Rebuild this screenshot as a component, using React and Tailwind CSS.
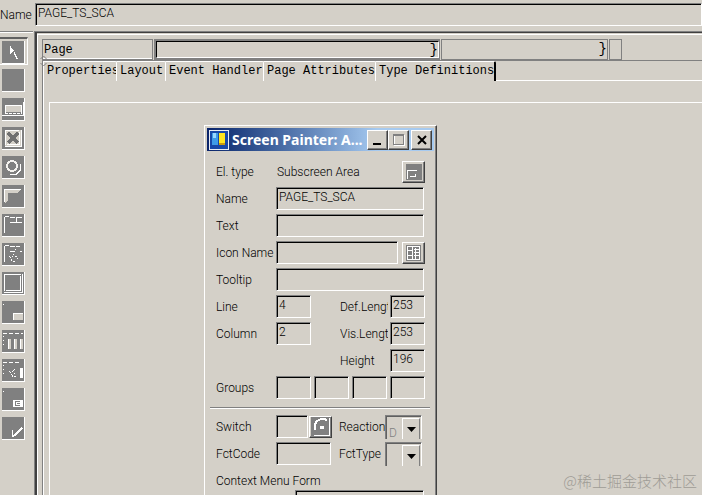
import React, { useState } from "react";

const tools = [
  {
    name: "Select",
    icon: (
      <>
        <path d="M8 5v8h1v-1h1v-1h1v-1h1v-1h-1v-1h-1V7H9V5z" fill="#fff" />
        <path d="M12 11v2h1v2h1v2h1v1" stroke="#fff" fill="none" />
      </>
    ),
  },
  { name: "Text field", icon: null },
  {
    name: "Input field",
    icon: (
      <>
        <path d="M3 7h17v7H3z" fill="#d4d0c8" />
        <path d="M3.5 15V7.5h16V15" stroke="#fff" fill="none" />
        <path d="M3 15.5h17" stroke="#fff" strokeDasharray="3 1" />
        <path d="M0 17.5h22M21.500 4v14" stroke="#fff" />
      </>
    ),
  },
  {
    name: "Checkbox",
    icon: (
      <>
        <path d="M3 3h16v16H3z" fill="#d4d0c8" />
        <path d="M3.5 18V3.5H17M19.5 3v16.500H3" stroke="#fff" fill="none" />
        <path d="M17.500 5v12.500H5" stroke="#fff" fill="none" />
        <path d="M6 6l10 10M16 6L6 16" stroke="#707070" strokeWidth="3" />
      </>
    ),
  },
  {
    name: "Radio button",
    icon: (
      <>
        <circle cx="10" cy="10" r="5" stroke="#f4f2ee" strokeWidth="2" fill="none" />
        <path d="M18.500 8v6l-4 4H8" stroke="#fff" fill="none" />
      </>
    ),
  },
  {
    name: "Push button",
    icon: (
      <>
        <path d="M3 5h15l-3 3H6v8l-3 2z" fill="#d4d0c8" />
        <path d="M2.500 17V4.500H19" stroke="#fff" fill="none" />
      </>
    ),
  },
  {
    name: "Tabstrip",
    icon: (
      <>
        <path d="M2.500 19V3M3 2.500h4M8 3.500h5M14 3.500h6M14.500 4v4M8 8.500h12" stroke="#fff" fill="none" />
      </>
    ),
  },
  {
    name: "Tabstrip wizard",
    icon: (
      <>
        <path d="M2.500 19V3M3 2.500h4M8 3.500h5M14 3.500h4M8 8.500h5M18 8.500h2" stroke="#fff" fill="none" />
        <path d="M13 6h1v1h-1zM11 11h1v1h-1zM8 14h1v1H8zM7 13h1v1H7zM10 13h1v1h-1zM13 13h2v1h-2zM9 16h1v2H9zM11 18h2v1h-2zM15 15h1v1h-1z" fill="#fff" />
      </>
    ),
  },
  {
    name: "Box",
    icon: <path d="M2.500 19V2.500H19M20.500 2v18.500H2M18.500 4v14.500H4" stroke="#fff" fill="none" />,
  },
  {
    name: "Subscreen area",
    icon: (
      <>
        <path d="M11 12h10v7H11z" fill="#d4d0c8" />
        <path d="M11.500 19v-6.500H21" stroke="#fff" fill="none" />
        <path d="M1 3h1v1H1z" fill="#fff" />
      </>
    ),
  },
  {
    name: "Table control",
    icon: (
      <>
        <path d="M1 3.500h20" stroke="#fff" strokeDasharray="4 2" />
        <path d="M1.500 6v12" stroke="#fff" strokeDasharray="1 3" />
        <path d="M6 9h3v10H6zM12 9h3v10h-3zM18 9h3v10h-3z" fill="#d4d0c8" />
        <path d="M6.500 9v10M12.500 9v10M18.500 9v10" stroke="#fff" />
      </>
    ),
  },
  {
    name: "Table control wizard",
    icon: (
      <>
        <path d="M1 3.500h16" stroke="#fff" strokeDasharray="4 2" />
        <path d="M1.500 6v12" stroke="#fff" strokeDasharray="1 3" />
        <path d="M18 9h3v10h-3z" fill="#fff" />
        <path d="M12 10h1v1h-1zM11 11h1v1h-1zM10 12h1v1h-1zM7 12h1v1H7zM8 13h1v1H8zM9 15h1v1H9zM12 14h1v1h-1zM10 16h1v2h-1zM12 17h2v1h-2z" fill="#fff" />
      </>
    ),
  },
  {
    name: "Custom control",
    icon: (
      <>
        <path d="M11 12h10v7H11z" fill="#fff" />
        <path d="M18 13.500h-4l-1 1v2l1 1h4M15 15.500h3" stroke="#808080" fill="none" />
        <path d="M1 3h1v1H1z" fill="#fff" />
      </>
    ),
  },
  {
    name: "Status icon",
    icon: (
      <>
        <path d="M10.500 13v7" stroke="#fff" />
        <path d="M11 19l2-1 7-7" stroke="#fff" strokeWidth="2" fill="none" />
      </>
    ),
  },
];

const tabs = [
  { name: "Properties", width: "w-[73px]" },
  { name: "Layout", width: "w-[49px]" },
  { name: "Event Handler", width: "w-[98px]" },
  { name: "Page Attributes", width: "w-[112px]" },
  { name: "Type Definitions", width: "w-[120px]" },
];

const sunken =
  "h-[23px] min-w-0 border border-t-[#808080] border-l-[#808080] border-r-white border-b-white bg-[#d4d0c8] px-[2px] pb-1 shadow-[inset_1px_1px_0_#000] outline-none";
const raised =
  "flex items-center justify-center border border-t-white border-l-white border-r-[#404040] border-b-[#404040] bg-[#d4d0c8] shadow-[inset_-1px_-1px_0_#808080]";

function ToolButton({ name, icon, active, onClick }) {
  return (
    <button
      type="button"
      aria-label={name}
      aria-pressed={active}
      onClick={onClick}
      className={
        active
          ? "mb-1 h-7 w-7 border-t-2 border-r border-b border-t-[#606060] border-r-white border-b-white pt-px pl-[2px]"
          : "mb-[6px] ml-[2px] h-[23px] w-[23px]"
      }
    >
      <span className="block h-[23px] w-[23px] border-r border-b border-white bg-[#808080]">
        <svg viewBox="0 0 22 22" className="h-[22px] w-[22px]" shapeRendering="crispEdges">
          {icon}
        </svg>
      </span>
    </button>
  );
}

function Row({ label, id, children }) {
  return (
    <div className="mb-1 flex h-[23px] items-center">
      <label htmlFor={id} className="w-[60px] shrink-0 whitespace-nowrap">
        {label}
      </label>
      {children}
    </div>
  );
}

function SideField({ label, id, value }) {
  return (
    <>
      <label htmlFor={id} className="ml-auto w-12 overflow-hidden whitespace-nowrap">
        {label}
      </label>
      <input id={id} defaultValue={value} className={`${sunken} ml-[2px] w-[35px]`} />
    </>
  );
}

function DropDown({ id, label, value }) {
  return (
    <>
      <label htmlFor={id} className="ml-auto w-[46px] whitespace-nowrap">
        {label}
      </label>
      <div className="relative mr-[3px] h-6 w-[37px] self-start border-t border-r border-l border-t-[#808080] border-r-white border-l-[#808080] shadow-[inset_1px_1px_0_#606060]">
        <select id={id} defaultValue={value} className="h-full w-full appearance-none bg-transparent pt-[9px] pl-[3px] text-[#808080] outline-none">
          <option>{value}</option>
        </select>
        <span className="pointer-events-none absolute top-[2px] right-px bottom-0 flex w-[18px] items-center justify-center border-t border-r border-l border-t-white border-r-[#808080] border-l-white bg-[#d4d0c8]">
          <svg viewBox="0 0 9 5" className="h-[5px] w-[9px]">
            <path d="M0 0h9L4.500 5z" />
          </svg>
        </span>
      </div>
    </>
  );
}

function PainterWindow() {
  return (
    <section className="absolute top-[22px] left-[154px] w-[233px] border border-t-white border-r-[#404040] border-b-[#404040] border-l-white bg-[#d4d0c8] p-[2px] shadow-[inset_-1px_0_0_#808080]">
      <header className="flex h-[23px] items-center bg-linear-to-r from-[#0a246a] to-[#a6caf0] to-75% pr-[2px] pl-[2px]">
        <svg viewBox="0 0 20 20" className="h-5 w-5 shrink-0" shapeRendering="crispEdges">
          <path d="M0 0h20v20H0z" fill="#e8ecf4" />
          <path d="M1 1h18v18H1z" fill="#1747a8" />
          <path d="M3 3h6v12H3z" fill="#3f9be8" />
          <path d="M4 3h3v5H4z" fill="#9ad8ff" />
          <path d="M10 3h6v11h-6z" fill="#ffe51f" />
          <path d="M10 13h6v2h-6z" fill="#c89a10" />
        </svg>
        <h1 className="ml-[3px] flex-1 font-['Noto_Sans','Open_Sans',sans-serif] text-[14px] leading-5 font-bold whitespace-nowrap text-white">
          Screen Painter: A...
        </h1>
        <button type="button" aria-label="Minimize" className={`${raised} h-5 w-[21px] shrink-0`}>
          <svg viewBox="0 0 10 10" className="h-[10px] w-[10px]">
            <path d="M0 8h8v2H0z" />
          </svg>
        </button>
        <button type="button" aria-label="Maximize" className={`${raised} h-5 w-[21px] shrink-0`}>
          <svg viewBox="0 0 12 12" className="h-3 w-3" shapeRendering="crispEdges">
            <path d="M1.500 1.500h10v10h-10z" stroke="#fff" fill="none" />
            <path d="M.5.500h10v10H.5zM0 1.500h11" stroke="#808080" fill="none" />
          </svg>
        </button>
        <button type="button" aria-label="Close" className={`${raised} ml-[2px] h-5 w-[21px] shrink-0`}>
          <svg viewBox="0 0 10 10" className="h-[10px] w-[10px]">
            <path d="M1 1l8 8M9 1L1 9" stroke="#000" strokeWidth="2" />
          </svg>
        </button>
      </header>

      <form className="pt-[9px] pr-[9px] pl-[9px]" onSubmit={(e) => e.preventDefault()}>
        <div className="mb-1 flex h-[23px] items-center">
          <span className="w-[61px]">El. type</span>
          <span>Subscreen Area</span>
          <button type="button" aria-label="Convert element" className={`${raised} ml-auto h-[22px] w-[23px]`}>
            <svg viewBox="0 0 16 16" className="h-4 w-4" shapeRendering="crispEdges">
              <path d="M0 0h16v16H0z" fill="#808080" />
              <path d="M1.500 15V6.500H11M4 12.500h5.500v-3" stroke="#fff" fill="none" />
            </svg>
          </button>
        </div>
        <Row label="Name" id="el-name">
          <input id="el-name" defaultValue="PAGE_TS_SCA" className={`${sunken} w-[148px]`} />
        </Row>
        <Row label="Text" id="el-text">
          <input id="el-text" className={`${sunken} w-[148px]`} />
        </Row>
        <Row label="Icon Name" id="el-icon">
          <input id="el-icon" className={`${sunken} w-[122px]`} />
          <button type="button" aria-label="Choose icon" className={`${raised} ml-auto h-[22px] w-[23px]`}>
            <svg viewBox="0 0 15 16" className="h-4 w-[15px]" shapeRendering="crispEdges">
              <path d="M0 0h15v16H0z" fill="#808080" />
              <path d="M1.500 1.500h12v13h-12z" stroke="#fff" fill="none" />
              <path d="M6.500 1v14M2 5.500h4M2 10.500h4M8 4.500h5M8 7.500h5M8 10.500h5M9.500 3v11" stroke="#fff" />
            </svg>
          </button>
        </Row>
        <Row label="Tooltip" id="el-tooltip">
          <input id="el-tooltip" className={`${sunken} w-[148px]`} />
        </Row>
        <Row label="Line" id="el-line">
          <input id="el-line" defaultValue="4" className={`${sunken} w-[35px]`} />
          <SideField label="Def.Length" id="def-length" value="253" />
        </Row>
        <Row label="Column" id="el-column">
          <input id="el-column" defaultValue="2" className={`${sunken} w-[35px]`} />
          <SideField label="Vis.Length" id="vis-length" value="253" />
        </Row>
        <div className="mb-1 flex h-[23px] items-center">
          <SideField label="Height" id="el-height" value="196" />
        </div>
        <Row label="Groups" id="group-1">
          <div className="flex gap-[3px]">
            {[1, 2, 3, 4].map((n) => (
              <input key={n} id={`group-${n}`} aria-label={`Group ${n}`} className={`${sunken} w-[35px]`} />
            ))}
          </div>
        </Row>
        <hr className="mt-2 mr-[-5px] mb-[6px] ml-[-6px] h-[2px] border-t border-b border-t-[#808080] border-b-white" />
        <Row label="Switch" id="el-switch">
          <input id="el-switch" className={`${sunken} w-8`} />
          <button type="button" aria-label="Find switch" className={`${raised} ml-px h-[22px] w-[23px]`}>
            <svg viewBox="0 0 20 19" className="h-[19px] w-5" shapeRendering="crispEdges">
              <path d="M0 0h20v19H0z" fill="#808080" />
              <path d="M16 3l-3-1h-3L6 4 4 7v6" stroke="#fff" strokeWidth="2" fill="none" />
              <path d="M9 9h4v3H9z" fill="#fff" />
              <path d="M18.500 1v17H3" stroke="#fff" fill="none" />
            </svg>
          </button>
          <DropDown id="el-reaction" label="Reaction" value="D" />
        </Row>
        <Row label="FctCode" id="el-fctcode">
          <input id="el-fctcode" className={`${sunken} w-[55px]`} />
          <DropDown id="el-fcttype" label="FctType" value="" />
        </Row>
        <label htmlFor="context-form" className="block h-[21px] pt-[2px] leading-5">
          Context Menu Form
        </label>
        <div className="pl-[79px]">
          <input id="context-form" className={`${sunken} w-[129px]`} />
        </div>
      </form>
    </section>
  );
}

export default function App() {
  const [tool, setTool] = useState("Select");

  return (
    <div className="relative flex h-screen flex-col overflow-hidden bg-[#d4d0c8] font-[Roboto,'Liberation_Sans',sans-serif] text-[12px] leading-4 font-light text-black">
      <div className="flex h-[31px] shrink-0 pt-[3px]">
        <label htmlFor="page-name" className="w-[35px] shrink-0 pt-1">
          Name
        </label>
        <input id="page-name" defaultValue="PAGE_TS_SCA" className={`${sunken} flex-1`} />
      </div>

      <div className="flex min-h-0 flex-1">
        <aside className="mr-px w-[33px] shrink-0 border-t border-[#808080] shadow-[inset_0_1px_0_#fff]">
          <div className="flex flex-col pt-[5px]">
            {tools.map((t) => (
              <ToolButton
                key={t.name}
                name={t.name}
                icon={t.icon}
                active={tool === t.name}
                onClick={() => setTool(t.name)}
              />
            ))}
          </div>
        </aside>

        <div className="flex min-w-0 flex-1 border-t border-l border-[#808080]">
          <div className="flex min-w-0 flex-1 border-t border-l-2 border-[#404040] pt-px">
            <main className="flex min-w-0 flex-1 flex-col border-t border-l border-white pt-1 pl-1">
              <div className="flex h-[21px] shrink-0 gap-px font-['Liberation_Mono','Courier_New',monospace]">
                <div className="w-[111px] border border-[#808080] pl-px leading-5 shadow-[inset_0_-1px_0_#fff]">Page</div>
                <div className="flex w-[286px] border-t-2 border-r border-b-2 border-l-2 border-[#808080]">
                  <div className="flex-1 border border-t-black border-r-white border-b-white border-l-black text-right text-[14px] leading-4">{"}"}</div>
                </div>
                <div className="w-[167px] border border-[#808080] text-right text-[14px] leading-[18px]">{"}"}</div>
                <div className="w-[13px] border border-[#808080]" />
              </div>

              <div className="relative flex min-h-0 flex-1 flex-col border-t border-l border-[#808080]">
                <svg viewBox="0 0 7 10" className="absolute -top-[5px] -left-[3px] h-[10px] w-[7px]">
                  <path d="M.5 3l3-3 3 3M.5 7l3 3 3-3" stroke="#808080" fill="none" />
                </svg>
                <div className="flex min-h-0 flex-1 flex-col border-l border-white">
                  <nav className="flex h-5 shrink-0 font-['Liberation_Mono','Courier_New',monospace]">
                    {tabs.map((tab) => (
                      <a
                        key={tab.name}
                        href="#"
                        className={`${tab.width} block shrink-0 overflow-hidden rounded-tr-[2px] border-t border-r border-white pl-[3px] leading-[19px] whitespace-nowrap last-of-type:border-r-2 last-of-type:border-r-black`}
                      >
                        {tab.name}
                      </a>
                    ))}
                    <div className="flex-1 border-b border-white" />
                  </nav>
                  <div className="relative mt-[21px] ml-[5px] flex-1 border-t border-l border-white">
                    <PainterWindow />
                  </div>
                </div>
              </div>
            </main>
          </div>
        </div>
      </div>

      <p className="absolute right-[5px] bottom-1 font-['Noto_Sans_CJK_SC',sans-serif] text-[15px] leading-5 font-light text-[#9f9c96]">
        @稀土掘金技术社区
      </p>
    </div>
  );
}
